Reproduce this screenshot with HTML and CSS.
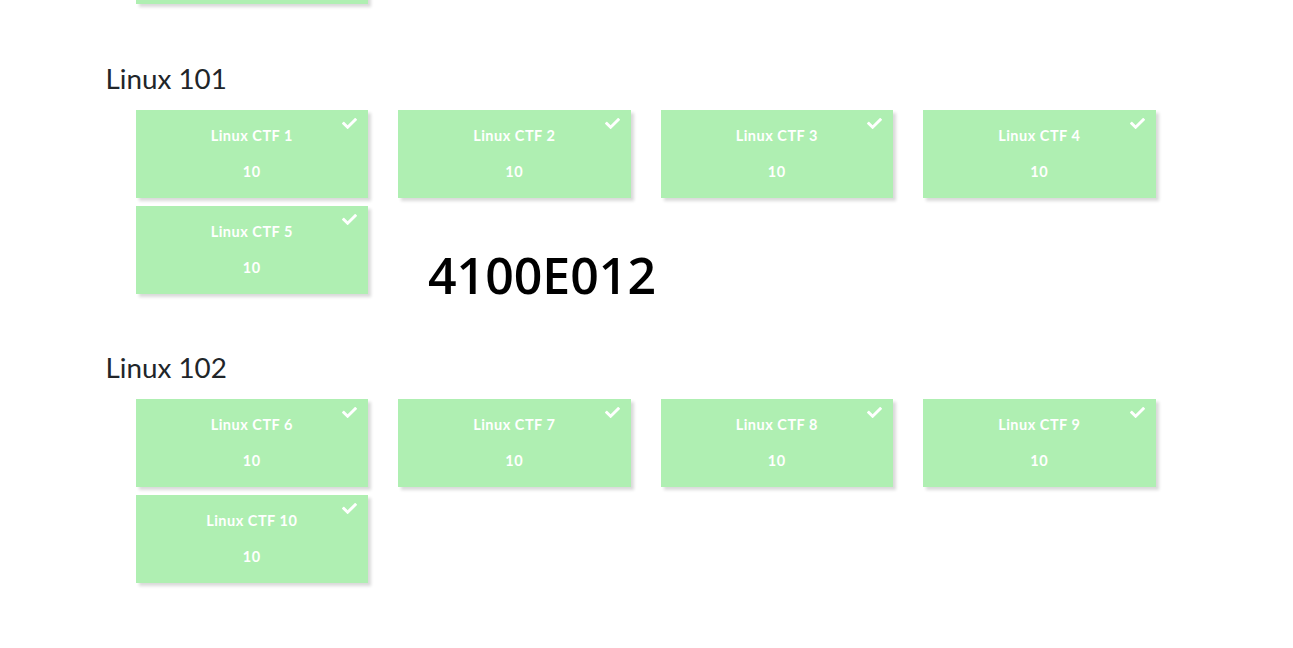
FILE: index.html
```html
<!DOCTYPE html>
<html>
<head>
<meta charset="utf-8">
<link rel="stylesheet" href="styles.css">
</head>
<body>
<main class="page">
  <section class="category first">
    <div class="grid">
      <div class="card"><span class="check"><svg viewBox="0 0 512 512"><path d="M173.9 439.4L7.5 273c-10-10-10-26.2 0-36.2l36.2-36.2c10-10 26.2-10 36.2 0L192 312.7 432.1 72.6c10-10 26.2-10 36.2 0l36.2 36.2c10 10 10 26.2 0 36.2L210.1 439.4c-10 10-26.2 10-36.2 0z"/></svg></span><div class="name">Linux CTF 0</div><div class="pts">10</div></div>
    </div>
  </section>

  <section class="category">
    <h3 class="cat-title">Linux 101</h3>
    <div class="grid">
      <div class="card"><span class="check"><svg viewBox="0 0 512 512"><path d="M173.9 439.4L7.5 273c-10-10-10-26.2 0-36.2l36.2-36.2c10-10 26.2-10 36.2 0L192 312.7 432.1 72.6c10-10 26.2-10 36.2 0l36.2 36.2c10 10 10 26.2 0 36.2L210.1 439.4c-10 10-26.2 10-36.2 0z"/></svg></span><div class="name">Linux CTF 1</div><div class="pts">10</div></div>
      <div class="card"><span class="check"><svg viewBox="0 0 512 512"><path d="M173.9 439.4L7.5 273c-10-10-10-26.2 0-36.2l36.2-36.2c10-10 26.2-10 36.2 0L192 312.7 432.1 72.6c10-10 26.2-10 36.2 0l36.2 36.2c10 10 10 26.2 0 36.2L210.1 439.4c-10 10-26.2 10-36.2 0z"/></svg></span><div class="name">Linux CTF 2</div><div class="pts">10</div></div>
      <div class="card"><span class="check"><svg viewBox="0 0 512 512"><path d="M173.9 439.4L7.5 273c-10-10-10-26.2 0-36.2l36.2-36.2c10-10 26.2-10 36.2 0L192 312.7 432.1 72.6c10-10 26.2-10 36.2 0l36.2 36.2c10 10 10 26.2 0 36.2L210.1 439.4c-10 10-26.2 10-36.2 0z"/></svg></span><div class="name">Linux CTF 3</div><div class="pts">10</div></div>
      <div class="card"><span class="check"><svg viewBox="0 0 512 512"><path d="M173.9 439.4L7.5 273c-10-10-10-26.2 0-36.2l36.2-36.2c10-10 26.2-10 36.2 0L192 312.7 432.1 72.6c10-10 26.2-10 36.2 0l36.2 36.2c10 10 10 26.2 0 36.2L210.1 439.4c-10 10-26.2 10-36.2 0z"/></svg></span><div class="name">Linux CTF 4</div><div class="pts">10</div></div>
      <div class="card"><span class="check"><svg viewBox="0 0 512 512"><path d="M173.9 439.4L7.5 273c-10-10-10-26.2 0-36.2l36.2-36.2c10-10 26.2-10 36.2 0L192 312.7 432.1 72.6c10-10 26.2-10 36.2 0l36.2 36.2c10 10 10 26.2 0 36.2L210.1 439.4c-10 10-26.2 10-36.2 0z"/></svg></span><div class="name">Linux CTF 5</div><div class="pts">10</div></div>
      <div class="code">4100E012</div>
    </div>
  </section>

  <section class="category">
    <h3 class="cat-title">Linux 102</h3>
    <div class="grid">
      <div class="card"><span class="check"><svg viewBox="0 0 512 512"><path d="M173.9 439.4L7.5 273c-10-10-10-26.2 0-36.2l36.2-36.2c10-10 26.2-10 36.2 0L192 312.7 432.1 72.6c10-10 26.2-10 36.2 0l36.2 36.2c10 10 10 26.2 0 36.2L210.1 439.4c-10 10-26.2 10-36.2 0z"/></svg></span><div class="name">Linux CTF 6</div><div class="pts">10</div></div>
      <div class="card"><span class="check"><svg viewBox="0 0 512 512"><path d="M173.9 439.4L7.5 273c-10-10-10-26.2 0-36.2l36.2-36.2c10-10 26.2-10 36.2 0L192 312.7 432.1 72.6c10-10 26.2-10 36.2 0l36.2 36.2c10 10 10 26.2 0 36.2L210.1 439.4c-10 10-26.2 10-36.2 0z"/></svg></span><div class="name">Linux CTF 7</div><div class="pts">10</div></div>
      <div class="card"><span class="check"><svg viewBox="0 0 512 512"><path d="M173.9 439.4L7.5 273c-10-10-10-26.2 0-36.2l36.2-36.2c10-10 26.2-10 36.2 0L192 312.7 432.1 72.6c10-10 26.2-10 36.2 0l36.2 36.2c10 10 10 26.2 0 36.2L210.1 439.4c-10 10-26.2 10-36.2 0z"/></svg></span><div class="name">Linux CTF 8</div><div class="pts">10</div></div>
      <div class="card"><span class="check"><svg viewBox="0 0 512 512"><path d="M173.9 439.4L7.5 273c-10-10-10-26.2 0-36.2l36.2-36.2c10-10 26.2-10 36.2 0L192 312.7 432.1 72.6c10-10 26.2-10 36.2 0l36.2 36.2c10 10 10 26.2 0 36.2L210.1 439.4c-10 10-26.2 10-36.2 0z"/></svg></span><div class="name">Linux CTF 9</div><div class="pts">10</div></div>
      <div class="card"><span class="check"><svg viewBox="0 0 512 512"><path d="M173.9 439.4L7.5 273c-10-10-10-26.2 0-36.2l36.2-36.2c10-10 26.2-10 36.2 0L192 312.7 432.1 72.6c10-10 26.2-10 36.2 0l36.2 36.2c10 10 10 26.2 0 36.2L210.1 439.4c-10 10-26.2 10-36.2 0z"/></svg></span><div class="name">Linux CTF 10</div><div class="pts">10</div></div>
    </div>
  </section>
</main>
</body>
</html>
```

FILE: styles.css
```css
html, body {
  margin: 0;
  padding: 0;
  background: #fff;
  overflow: hidden;
}

body {
  font-family: Lato, "Open Sans", sans-serif;
  color: #212529;
}

.page {
  width: 1140px;
  margin: 0 auto;
  padding: 0 15px 0 29px;
  box-sizing: border-box;
}

.category.first {
  margin-top: -84px;
  padding-bottom: 58px;
}

.category {
  padding-bottom: 51px;
}

.cat-title {
  font-family: Lato, sans-serif;
  font-weight: 400;
  font-size: 27.8px;
  line-height: 1.2;
  margin: 0 0 24px 0;
  height: 24px;
  padding-top: 0;
  color: #212529;
}

.grid {
  display: grid;
  grid-template-columns: repeat(4, 232.5px);
  column-gap: 30px;
  row-gap: 8px;
  padding-left: 30px;
}

.card {
  position: relative;
  height: 88px;
  background: rgb(175, 239, 178);
  box-shadow: 3px 3px 3px rgba(0, 0, 0, 0.15);
  color: #fff;
  font-family: Lato, sans-serif;
  font-weight: 700;
  font-size: 14.5px;
  letter-spacing: 0.5px;
  text-align: center;
  display: flex;
  flex-direction: column;
  align-items: center;
  box-sizing: border-box;
  padding-top: 17px;
}

.name {
  line-height: 18px;
  height: 18px;
}

.pts {
  margin-top: 18px;
  line-height: 18px;
}

.check {
  position: absolute;
  top: 6px;
  right: 11px;
  width: 15px;
  height: 15px;
  display: block;
}

.check svg {
  width: 15px;
  height: 15px;
  fill: #fff;
  display: block;
}

.code {
  font-family: "Open Sans", "Noto Sans", sans-serif;
  font-weight: 600;
  font-size: 50px;
  color: #000;
  line-height: 1;
  padding: 44px 0 0 30px;
  white-space: nowrap;
}
```
